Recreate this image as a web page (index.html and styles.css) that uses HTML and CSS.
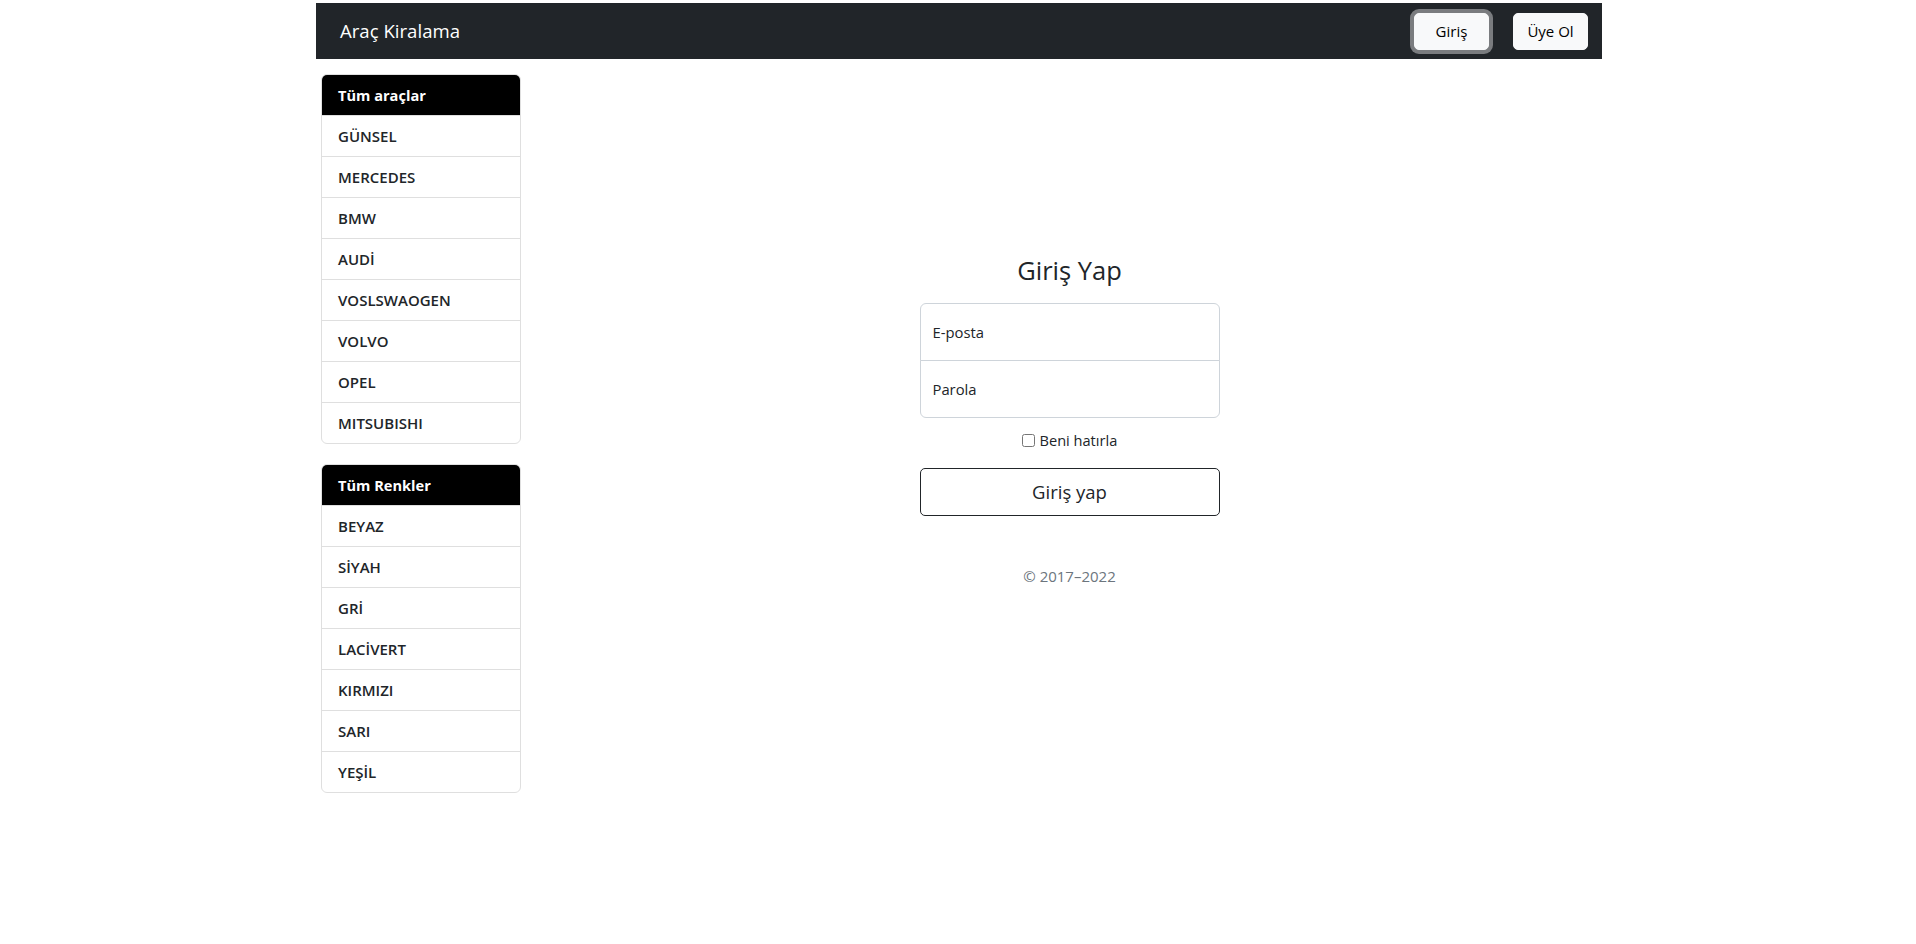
FILE: index.html
```html
<!DOCTYPE html>
<html lang="tr">
<head>
<meta charset="utf-8">
<title>Araç Kiralama</title>
<link rel="stylesheet" href="styles.css">
</head>
<body>
<div class="page">
  <nav class="navbar">
    <a class="brand" href="#">Araç Kiralama</a>
    <div class="nav-actions">
      <button class="btn btn-light is-focused" type="button">Giriş</button>
      <button class="btn btn-light" type="button">Üye Ol</button>
    </div>
  </nav>

  <div class="content">
    <aside class="sidebar">
      <div class="card">
        <div class="card-header">Tüm araçlar</div>
        <ul class="list">
          <li class="list-item">GÜNSEL</li>
          <li class="list-item">MERCEDES</li>
          <li class="list-item">BMW</li>
          <li class="list-item">AUDİ</li>
          <li class="list-item">VOSLSWAOGEN</li>
          <li class="list-item">VOLVO</li>
          <li class="list-item">OPEL</li>
          <li class="list-item">MITSUBISHI</li>
        </ul>
      </div>
      <div class="card">
        <div class="card-header">Tüm Renkler</div>
        <ul class="list">
          <li class="list-item">BEYAZ</li>
          <li class="list-item">SİYAH</li>
          <li class="list-item">GRİ</li>
          <li class="list-item">LACİVERT</li>
          <li class="list-item">KIRMIZI</li>
          <li class="list-item">SARI</li>
          <li class="list-item">YEŞİL</li>
        </ul>
      </div>
    </aside>

    <main class="main">
      <form class="signin">
        <h1 class="signin-title">Giriş Yap</h1>
        <div class="fields">
          <div class="field field-top"><label class="field-label">E-posta</label></div>
          <div class="field field-bottom"><label class="field-label">Parola</label></div>
        </div>
        <div class="remember">
          <label class="remember-label"><input type="checkbox" class="remember-box"> Beni hatırla</label>
        </div>
        <button class="btn-submit" type="button">Giriş yap</button>
        <p class="copyright">© 2017–2022</p>
      </form>
    </main>
  </div>
</div>
</body>
</html>
```
FILE: styles.css
```css
* { box-sizing: border-box; }

body {
  margin: 0;
  font-family: "Open Sans", "Noto Sans", sans-serif;
  font-size: 15px;
  line-height: 24px;
  color: #212529;
  background: #fff;
}

.page {
  width: 1286px;
  margin: 3px 0 0 calc(50% - 642px);
}

/* navbar */
.navbar {
  height: 56px;
  background: #212529;
  display: flex;
  align-items: center;
  padding: 0 14px 0 24px;
}
.brand {
  color: #fff;
  text-decoration: none;
  font-size: 18.6px;
  line-height: 30px;
}
.nav-actions {
  margin-left: auto;
  display: flex;
  gap: 24px;
}
.btn {
  font-family: inherit;
  width: 75px;
  height: 37px;
  padding: 0;
  font-size: 15px;
  line-height: 24px;
  color: #000;
  background: #f8f9fa;
  border: 1px solid #f8f9fa;
  border-radius: 5px;
  cursor: pointer;
}
.btn.is-focused {
  box-shadow: 0 0 0 4px #7a7c7f;
}

/* layout */
.content {
  display: flex;
  align-items: flex-start;
}
.sidebar {
  width: 200px;
  margin: 15px 16px 0 5px;
  display: flex;
  flex-direction: column;
  gap: 20px;
}
.main {
  flex: 1;
  display: flex;
  justify-content: center;
}

/* cards */
.card {
  border: 1px solid #dfdfdf;
  border-radius: 6px;
  overflow: hidden;
}
.card-header {
  background: #000;
  color: #fff;
  font-weight: 700;
  font-size: 14.6px;
  line-height: 24px;
  padding: 8px 16px;
  border-bottom: 1px solid #dfdfdf;
}
.list {
  list-style: none;
  margin: 0;
  padding: 0;
}
.list-item {
  padding: 8px 16px;
  font-size: 15px;
  font-weight: 600;
  line-height: 24px;
  color: #212529;
  border-bottom: 1px solid #dfdfdf;
}
.list-item:last-child {
  border-bottom: none;
}

/* sign in */
.signin {
  width: 300px;
  padding-top: 194px;
  text-align: center;
}
.signin-title {
  margin: 0 0 16px;
  font-size: 25.5px;
  line-height: 34px;
  font-weight: 400;
  color: #212529;
}
.fields {
  text-align: left;
}
.field {
  height: 58px;
  border: 1px solid #ced4da;
  padding: 16px 12px;
}
.field-top {
  border-radius: 6px 6px 0 0;
}
.field-bottom {
  margin-top: -1px;
  border-radius: 0 0 6px 6px;
}
.field-label {
  display: block;
  font-size: 14.8px;
  line-height: 24px;
  color: #212529;
}
.remember {
  margin: 10px 0 16px;
  height: 24px;
}
.remember-label {
  font-size: 14.6px;
  line-height: 24px;
}
.remember-box {
  width: 13px;
  height: 13px;
  margin: 0 1px 0 0;
  vertical-align: -1px;
}
.btn-submit {
  display: block;
  width: 100%;
  height: 48px;
  font-family: inherit;
  font-size: 18.5px;
  line-height: 30px;
  color: #212529;
  background: #fff;
  border: 1px solid #212529;
  border-radius: 5px;
}
.copyright {
  margin: 48px 0 16px;
  font-size: 15px;
  line-height: 24px;
  color: #6c757d;
}
```
